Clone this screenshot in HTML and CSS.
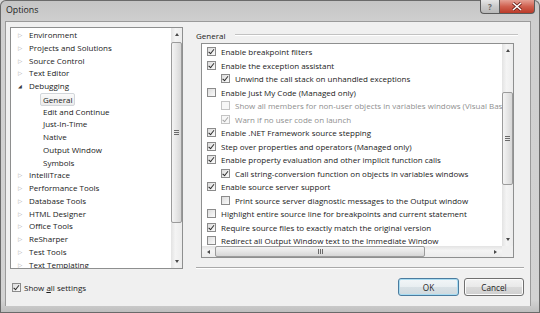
FILE: index.html
```html
<!DOCTYPE html>
<html lang="en">
<head>
    <meta charset="UTF-8">
    <title>Options</title>
    <link rel="stylesheet" href="styles.css">
</head>
<body>
<div class="window">
    <div class="titlebar">
        <span class="title">Options</span>
        <div class="caption">
            <div class="cap-btn help">?</div>
            <div class="cap-btn close">
                <svg width="12" height="9" viewBox="0 0 12 9"><path d="M2 1 L10 8 M10 1 L2 8" stroke="#6a2119" stroke-width="3"/><path d="M2 1 L10 8 M10 1 L2 8" stroke="#fff" stroke-width="1.5"/></svg>
            </div>
        </div>
    </div>
    <div class="client">
        <div class="left-col">
            <div class="tree-box">
                <ul class="tree">
                    <li class="node"><span class="tw"></span>Environment</li>
                    <li class="node"><span class="tw"></span>Projects and Solutions</li>
                    <li class="node"><span class="tw"></span>Source Control</li>
                    <li class="node"><span class="tw"></span>Text Editor</li>
                    <li class="node open"><span class="tw"></span>Debugging</li>
                    <li class="child"><span class="sel">General</span></li>
                    <li class="child">Edit and Continue</li>
                    <li class="child">Just-In-Time</li>
                    <li class="child">Native</li>
                    <li class="child">Output Window</li>
                    <li class="child">Symbols</li>
                    <li class="node"><span class="tw"></span>IntelliTrace</li>
                    <li class="node"><span class="tw"></span>Performance Tools</li>
                    <li class="node"><span class="tw"></span>Database Tools</li>
                    <li class="node"><span class="tw"></span>HTML Designer</li>
                    <li class="node"><span class="tw"></span>Office Tools</li>
                    <li class="node"><span class="tw"></span>ReSharper</li>
                    <li class="node"><span class="tw"></span>Test Tools</li>
                    <li class="node"><span class="tw"></span>Text Templating</li>
                </ul>
                <div class="vscroll">
                    <div class="sb-arrow up"></div>
                    <div class="sb-track"><div class="thumb tree-thumb"><span class="grip"></span></div></div>
                    <div class="sb-arrow down"></div>
                </div>
            </div>
            <div class="show-all"><span class="cb on"></span><span>Show <u>a</u>ll settings</span></div>
        </div>

        <div class="right-col">
            <div class="group-head"><span>General</span><span class="rule"></span></div>
            <div class="list-box">
                <div class="list">
                    <div class="opt"><span class="cb on"></span>Enable breakpoint filters</div>
                    <div class="opt"><span class="cb on"></span>Enable the exception assistant</div>
                    <div class="opt sub"><span class="cb on"></span>Unwind the call stack on unhandled exceptions</div>
                    <div class="opt"><span class="cb"></span>Enable Just My Code (Managed only)</div>
                    <div class="opt sub off"><span class="cb"></span>Show all members for non-user objects in variables windows (Visual Basic only)</div>
                    <div class="opt sub off"><span class="cb on"></span>Warn if no user code on launch</div>
                    <div class="opt"><span class="cb on"></span>Enable .NET Framework source stepping</div>
                    <div class="opt"><span class="cb on"></span>Step over properties and operators (Managed only)</div>
                    <div class="opt"><span class="cb on"></span>Enable property evaluation and other implicit function calls</div>
                    <div class="opt sub"><span class="cb on"></span>Call string-conversion function on objects in variables windows</div>
                    <div class="opt"><span class="cb on"></span>Enable source server support</div>
                    <div class="opt sub"><span class="cb"></span>Print source server diagnostic messages to the Output window</div>
                    <div class="opt"><span class="cb"></span>Highlight entire source line for breakpoints and current statement</div>
                    <div class="opt"><span class="cb on"></span>Require source files to exactly match the original version</div>
                    <div class="opt"><span class="cb"></span>Redirect all Output Window text to the Immediate Window</div>
                </div>
                <div class="vscroll">
                    <div class="sb-arrow up"></div>
                    <div class="sb-track"><div class="thumb list-thumb"><span class="grip"></span></div></div>
                    <div class="sb-arrow down"></div>
                </div>
                <div class="hscroll">
                    <div class="sb-arrow left"></div>
                    <div class="sb-track"><div class="thumb h-thumb"><span class="grip"></span></div></div>
                    <div class="sb-arrow right"></div>
                </div>
                <div class="corner"></div>
            </div>
            <div class="sep"></div>
            <div class="buttons">
                <button class="btn default">OK</button>
                <button class="btn">Cancel</button>
            </div>
        </div>
    </div>
</div>
</body>
</html>
```

FILE: styles.css
```css
body {
    margin: 0;
    padding: 0;
    font-family: "Open Sans", "Noto Sans", sans-serif;
    font-size: 8px;
    color: #1a1a1a;
    background: #d9d9d9;
}
.window {
    width: 540px;
    height: 313px;
    background: linear-gradient(#c4c4c4, #cfcfcf 22px, #d3d3d3 300px, #bdbdbd);
    box-shadow: inset 0 0 0 1px #6a6a6a;
    border-radius: 6px 6px 0 0;
    overflow: hidden;
}
.titlebar {
    height: 21px;
    display: flex;
    align-items: flex-start;
}
.title {
    margin: 4px 0 0 6px;
    font-size: 8.8px;
    color: #222;
}
.caption {
    margin-left: auto;
    margin-right: 5px;
    display: flex;
}
.cap-btn {
    height: 13px;
    border: 1px solid #5b5b5b;
    border-top: none;
    display: flex;
    align-items: center;
    justify-content: center;
}
.help {
    width: 18px;
    border-radius: 0 0 0 4px;
    border-right: none;
    background: linear-gradient(#e6e6e6, #cacaca 50%, #b9b9b9);
    color: #666;
    font-size: 8px;
    font-weight: bold;
}
.close {
    width: 34px;
    border-radius: 0 0 4px 0;
    background: linear-gradient(#e5a094, #d0604f 50%, #bb3a28);
}
.client {
    margin-left: 5px;
    width: 526px;
    height: 285px;
    box-sizing: border-box;
    padding: 5px 6px 0 4px;
    background: #f0f0f0;
    border: 1px solid #9a9a9a;
    border-bottom: none;
    display: grid;
    grid-template-columns: 173px 328px;
    column-gap: 13px;
}

/* tree */
.tree-box {
    height: 242px;
    box-sizing: border-box;
    border: 1px solid #8e8f8f;
    background: #fff;
    display: flex;
}
.tree {
    list-style: none;
    margin: 0;
    padding: 1px 0 0;
    flex: 1;
    overflow: hidden;
}
.tree li {
    height: 12.78px;
    line-height: 12.78px;
    white-space: nowrap;
    display: flex;
    align-items: center;
}
.tree .node {
    padding-left: 7px;
}
.tree .child {
    padding-left: 32px;
}
.tw {
    width: 9px;
    margin-right: 2px;
    font-family: "DejaVu Sans", sans-serif;
    font-size: 5.5px;
    color: #a8a8a8;
}
.tw::before {
    content: "\25B7";
}
.open .tw {
    color: #3a3a3a;
    font-size: 5px;
}
.open .tw::before {
    content: "\25E2";
}
.sel {
    margin-left: -3px;
    padding: 0 2px;
    height: 11px;
    line-height: 11px;
    border: 1px solid #d2d6da;
    border-radius: 2px;
    background: linear-gradient(#fafafa, #ececec);
}

/* scrollbars */
.vscroll {
    width: 11px;
    display: flex;
    flex-direction: column;
    background: linear-gradient(90deg, #e3e3e3, #f4f4f4 40%, #ececec);
}
.hscroll {
    height: 11px;
    display: flex;
    background: linear-gradient(#e3e3e3, #f4f4f4 40%, #ececec);
}
.sb-track {
    flex: 1;
    display: flex;
}
.vscroll .sb-track {
    flex-direction: column;
}
.sb-arrow {
    flex: 0 0 13px;
    display: flex;
    align-items: center;
    justify-content: center;
}
.sb-arrow::after {
    content: "";
    border: 2.5px solid transparent;
}
.sb-arrow.up::after {
    border-bottom: 3px solid #4a4a4a;
    border-top: none;
}
.sb-arrow.down::after {
    border-top: 3px solid #4a4a4a;
    border-bottom: none;
}
.sb-arrow.left::after {
    border-right: 3px solid #4a4a4a;
    border-left: none;
}
.sb-arrow.right::after {
    border-left: 3px solid #4a4a4a;
    border-right: none;
}
.thumb {
    box-sizing: border-box;
    border: 1px solid #9b9b9b;
    border-radius: 2px;
    display: flex;
    align-items: center;
    justify-content: center;
}
.vscroll .thumb {
    background: linear-gradient(90deg, #f4f4f4, #e6e6e6 50%, #d6d6d6);
}
.hscroll .thumb {
    background: linear-gradient(#f4f4f4, #e6e6e6 50%, #d6d6d6);
}
.vscroll .grip {
    width: 5px;
    height: 5px;
    background: repeating-linear-gradient(#6a6a6a 0 1px, transparent 1px 2px);
}
.hscroll .grip {
    width: 5px;
    height: 5px;
    background: repeating-linear-gradient(90deg, #6a6a6a 0 1px, transparent 1px 2px);
}
.tree-thumb {
    margin-top: 1px;
    height: 181px;
}
.list-thumb {
    margin-top: 35px;
    height: 93px;
}
.h-thumb {
    width: 210px;
}
.corner {
    background: #f0f0f0;
}

.show-all {
    margin-top: 14px;
    margin-left: 2px;
    display: flex;
    align-items: center;
    height: 9px;
}
.show-all .cb {
    margin-right: 3px;
}

/* checkboxes */
.cb {
    position: relative;
    flex: 0 0 9px;
    width: 9px;
    height: 9px;
    box-sizing: border-box;
    border: 1px solid #8b8b8b;
    background: linear-gradient(135deg, #dcdcdc, #fbfbfb);
    margin-right: 5px;
}
.cb.on::after {
    content: "";
    position: absolute;
    left: 2.3px;
    top: 0;
    width: 2px;
    height: 4.6px;
    border: solid #2c2c2c;
    border-width: 0 1.4px 1.4px 0;
    transform: rotate(38deg);
}
.off {
    color: #8f8f8f;
}
.off .cb {
    border-color: #c4c4c4;
    background: #f7f7f7;
}
.off .cb.on::after {
    border-color: #a6a6a6;
}

/* right side */
.group-head {
    height: 16px;
    display: flex;
    align-items: center;
}
.rule {
    flex: 1;
    margin: 0 6px 0 10px;
    border-top: 1px solid #c2c2c2;
    border-bottom: 1px solid #fff;
}
.list-box {
    margin-left: 5px;
    width: 313px;
    height: 215px;
    box-sizing: border-box;
    border: 1px solid #8e8f8f;
    background: #fff;
    display: grid;
    grid-template-columns: 1fr 11px;
    grid-template-rows: 1fr 11px;
}
.list {
    padding-top: 1px;
    overflow: hidden;
}
.opt {
    height: 13.5px;
    display: flex;
    align-items: center;
    white-space: nowrap;
    padding-left: 5px;
}
.opt.sub {
    padding-left: 19px;
}
.sep {
    margin-top: 9px;
    border-top: 1px solid #a9a9a9;
    border-bottom: 1px solid #fff;
}
.buttons {
    margin-top: 9px;
    display: flex;
    justify-content: flex-end;
    gap: 5px;
}
.btn {
    width: 60px;
    height: 18px;
    padding: 0;
    font-family: inherit;
    font-size: 8.2px;
    color: #1e1e1e;
    border: 1px solid #707070;
    border-radius: 3px;
    background: linear-gradient(#f3f3f3, #e9e9e9 50%, #dadada 51%, #cfcfcf);
    box-shadow: inset 0 0 0 1px #fcfcfc;
}
.btn.default {
    width: 61px;
    border-color: #4b7c9f;
    box-shadow: inset 0 0 0 1px #a8dcf2;
    background: linear-gradient(#f2f6f8, #e8eef1 50%, #d8e1e6 51%, #cfd9de);
}
```
